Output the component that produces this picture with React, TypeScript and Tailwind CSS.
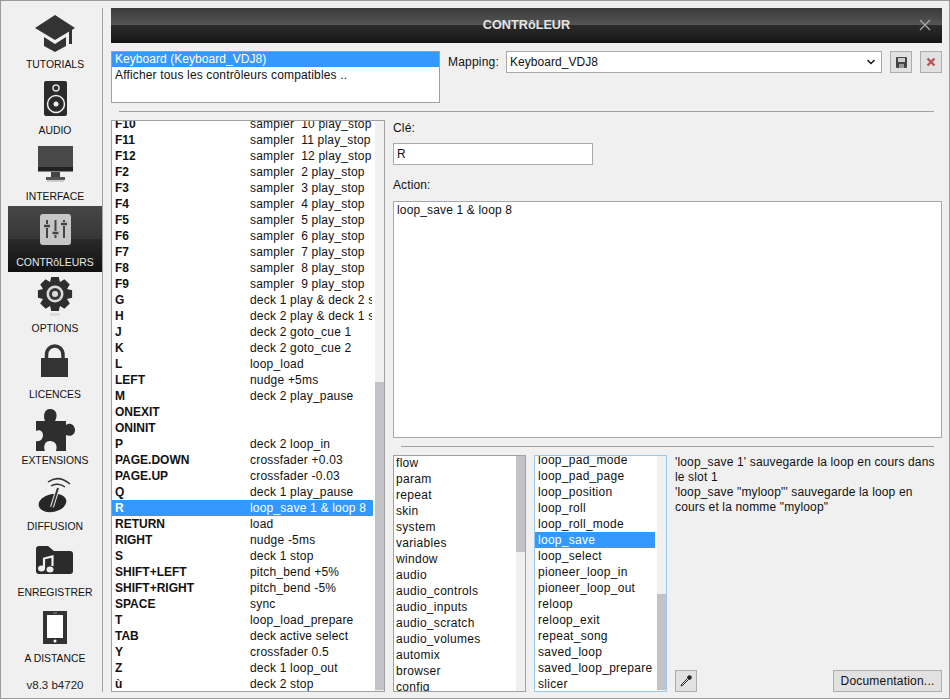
const gear = (() => {
  const cx = 55, cy = 294, pts: string[] = [];
  for (let i = 0; i < 8; i++) {
    const a = (i * Math.PI) / 4 - Math.PI / 2;
    const p = (r: number, d: number) => `${(cx + r * Math.cos(a + d)).toFixed(1)},${(cy + r * Math.sin(a + d)).toFixed(1)}`;
    pts.push(p(13, -0.39), p(17.5, -0.22), p(17.5, 0.22), p(13, 0.39));
  }
  return pts.join(" ");
})();

const items: { label: string; top: number; icon: React.ReactNode }[] = [
  { label: "TUTORIALS", top: 8, icon: (<>
    <path d="M55 15 L75 28 L55 40 L35 28 Z" fill="#333" />
    <path d="M44 37 L55 44 L66 37 L66 46 L55 52 L44 46 Z" fill="#333" />
    <path d="M69 31 L72 29 L72 44 L69 44 Z" fill="#333" />
  </>) },
  { label: "AUDIO", top: 74, icon: (<>
    <rect x="44" y="81" width="23" height="35" rx="2" fill="#2b2b2b" />
    <circle cx="56" cy="88" r="3" fill="none" stroke="#ddd" strokeWidth="1.5" />
    <circle cx="56" cy="104" r="8.5" fill="none" stroke="#eee" strokeWidth="1.5" />
    <circle cx="56" cy="104" r="2.5" fill="#eee" />
  </>) },
  { label: "INTERFACE", top: 140, icon: (<>
    <rect x="38" y="146" width="35" height="21" fill="#484848" />
    <rect x="38" y="167" width="35" height="4.5" fill="#222" />
    <rect x="51" y="172" width="9" height="5" fill="#444" />
    <rect x="46" y="177" width="19" height="3" fill="#555" />
    <rect x="47" y="180" width="17" height="2" fill="#ccc" />
  </>) },
  { label: "CONTRôLEURS", top: 206, icon: (<>
    <rect x="40" y="214" width="31" height="31" rx="3" fill="#c6c6c6" />
    <g stroke="#444" strokeWidth="2">
      <path d="M47 220 V224 M47 228 V238 M55.500 220 V231 M55.500 235 V238 M64 220 V222 M64 226 V238" />
      <path d="M44 226 H50 M52.500 233 H58.500 M61 224 H67" strokeWidth="2.500" />
    </g>
  </>) },
  { label: "OPTIONS", top: 272, icon: (<>
    <polygon points={gear} fill="#2e2e2e" />
    <circle cx="55" cy="294" r="8.500" fill="#dcdcdc" />
    <circle cx="55" cy="294" r="6" fill="#3a3a3a" />
    <circle cx="55" cy="294" r="3" fill="#dcdcdc" />
    <rect x="50" y="313" width="10" height="3" fill="#ddd" />
  </>) },
  { label: "LICENCES", top: 338, icon: (<>
    <rect x="41" y="358" width="27" height="19" fill="#333" />
    <path d="M46.500 359 V355 C46.500 343 63 343 63 355 V359" fill="none" stroke="#333" strokeWidth="3.500" />
  </>) },
  { label: "EXTENSIONS", top: 404, icon: (
    <path d="M36 421 L45 421 C43 416 44 409 50 409 C57 409 58 416 55 421 L66 421 L66 425 C70 422 75 425 75 430 C75 435 70 437 66 435 L66 451 L56 451 C58 445 55 441 50 441 C45 441 43 446 45 451 L36 451 L36 441 C40 442 43 439 43 435 C43 431 39 429 36 431 Z" fill="#2e2e2e" />
  ) },
  { label: "DIFFUSION", top: 470, icon: (<>
    <ellipse cx="52.500" cy="503" rx="14" ry="9" transform="rotate(-12 52.500 503)" fill="#262626" />
    <path d="M52 507 L58 488" stroke="#eee" strokeWidth="4" />
    <path d="M52 507 L58 488" stroke="#333" strokeWidth="2" />
    <path d="M48 482 C55 477 63 478 70 484 M51 486 C55 483 61 484 65 487" fill="none" stroke="#333" strokeWidth="1.500" />
  </>) },
  { label: "ENREGISTRER", top: 536, icon: (<>
    <path d="M36 549 Q36 546 39 546 L48 546 L54 551 L70 551 Q73 551 73 554 L73 571 Q73 574 70 574 L39 574 Q36 574 36 571 Z" fill="#2b2b2b" />
    <path d="M44 568 V558.500 L52.500 556.500 V566" fill="none" stroke="#eee" strokeWidth="2.200" />
    <ellipse cx="41.500" cy="568.500" rx="3.500" ry="3" fill="#eee" />
    <ellipse cx="50" cy="569.500" rx="3.500" ry="3" fill="#eee" />
  </>) },
  { label: "A DISTANCE", top: 602, icon: (<>
    <rect x="43" y="611" width="24" height="33" fill="#333" />
    <rect x="47" y="615" width="16" height="23" fill="#fff" />
    <circle cx="55" cy="641" r="1.500" fill="#fff" />
    <rect x="53" y="612.500" width="4" height="1" fill="#888" />
  </>) },
];

const keys: [string, string][] = [
  ["F10", "sampler  10 play_stop"], ["F11", "sampler  11 play_stop"], ["F12", "sampler  12 play_stop"],
  ["F2", "sampler  2 play_stop"], ["F3", "sampler  3 play_stop"], ["F4", "sampler  4 play_stop"],
  ["F5", "sampler  5 play_stop"], ["F6", "sampler  6 play_stop"], ["F7", "sampler  7 play_stop"],
  ["F8", "sampler  8 play_stop"], ["F9", "sampler  9 play_stop"], ["G", "deck 1 play & deck 2 stop"],
  ["H", "deck 2 play & deck 1 stop"], ["J", "deck 2 goto_cue 1"], ["K", "deck 2 goto_cue 2"],
  ["L", "loop_load"], ["LEFT", "nudge +5ms"], ["M", "deck 2 play_pause"], ["ONEXIT", ""], ["ONINIT", ""],
  ["P", "deck 2 loop_in"], ["PAGE.DOWN", "crossfader +0.03"], ["PAGE.UP", "crossfader -0.03"],
  ["Q", "deck 1 play_pause"], ["R", "loop_save 1 & loop 8"], ["RETURN", "load"], ["RIGHT", "nudge -5ms"],
  ["S", "deck 1 stop"], ["SHIFT+LEFT", "pitch_bend +5%"], ["SHIFT+RIGHT", "pitch_bend -5%"], ["SPACE", "sync"],
  ["T", "loop_load_prepare"], ["TAB", "deck active select"], ["Y", "crossfader 0.5"], ["Z", "deck 1 loop_out"], ["ù", "deck 2 stop"],
];

const groups = ["flow", "param", "repeat", "skin", "system", "variables", "window", "audio", "audio_controls", "audio_inputs", "audio_scratch", "audio_volumes", "automix", "browser", "config"];
const verbs = ["loop_pad_mode", "loop_pad_page", "loop_position", "loop_roll", "loop_roll_mode", "loop_save", "loop_select", "pioneer_loop_in", "pioneer_loop_out", "reloop", "reloop_exit", "repeat_song", "saved_loop", "saved_loop_prepare", "slicer"];

function SideItem({ label, top, icon }: { label: string; top: number; icon: React.ReactNode }) {
  const active = label === "CONTRôLEURS";
  return (
    <div className={active
      ? "h-[66px] w-[94px] shrink-0 flex flex-col bg-[linear-gradient(#474747_0%,#363636_50%,#2a2a2a_50%,#111_100%)]"
      : "h-[66px] w-[94px] shrink-0 flex flex-col"}>
      <svg width="94" height="49" viewBox={`8 ${top} 94 49`} className="block shrink-0">{icon}</svg>
      <div className={active
        ? "h-[16px] leading-[16px] text-center text-[10.4px] text-[#e8e8e8] whitespace-nowrap"
        : "h-[16px] leading-[16px] text-center text-[10.4px] text-[#111] whitespace-nowrap"}>{label}</div>
    </div>
  );
}

export default function App() {
  return (
    <div className="w-[950px] h-[699px] flex bg-[#f0f0f0] border border-[#9a9a9a] font-['Liberation_Sans',Arial,sans-serif] text-[12px] text-[#111] overflow-hidden">
      <div className="w-[102px] shrink-0 h-[684px] mt-[7px] pl-[7px] border-r border-[#a0a0a0] flex flex-col">
        {items.map((it) => <SideItem key={it.label} {...it} />)}
        <div className="w-[94px] text-center text-[11.5px] leading-[14px] mt-[10px] text-[#222]">v8.3 b4720</div>
      </div>

      <div className="w-[831px] ml-[8px] flex flex-col shrink-0">
        <div className="mt-[7px] h-[35px] shrink-0 flex items-center relative bg-[linear-gradient(#3a3a3a_0%,#555_48%,#2c2c2c_48%,#151515_100%)]">
          <div className="flex-1 text-center font-bold text-[12.7px] text-[#e4e4e4]">CONTRôLEUR</div>
          <svg width="12" height="12" viewBox="0 0 12 12" className="absolute right-[11px] top-[11px]">
            <path d="M1 1 L11 11 M11 1 L1 11" stroke="#a8a8a8" strokeWidth="1.300" />
          </svg>
        </div>

        <div className="mt-[8px] h-[52px] shrink-0 flex items-start">
          <div className="w-[329px] h-[52px] bg-white border border-[#a0a0a0]">
            <div className="h-[15px] leading-[15px] bg-[#3399ff] text-white pl-[3px] tracking-[0.05px]">Keyboard (Keyboard_VDJ8)</div>
            <div className="h-[16px] leading-[16px] pl-[3px] tracking-[0.16px]">Afficher tous les contrôleurs compatibles ..</div>
          </div>
          <div className="w-[66px] pl-[8px] h-[22px] leading-[22px] tracking-[0.2px]">Mapping:</div>
          <div className="w-[376px] h-[22px] bg-white border border-[#a9a9a9] flex items-center justify-between pl-[2px] pr-[6px]">
            <span className="tracking-[0.05px] pl-[1px]">Keyboard_VDJ8</span>
            <svg width="8" height="6" viewBox="0 0 8 6"><path d="M0.500 1 L4 4.500 L7.500 1" fill="none" stroke="#111" strokeWidth="1.400" /></svg>
          </div>
          <div className="ml-[8px] w-[22px] h-[22px] bg-[#e1e1e1] border border-[#adadad] flex items-center justify-center">
            <svg width="11" height="11" viewBox="0 0 11 11">
              <rect x="0" y="0" width="11" height="11" rx="1" fill="#444" />
              <rect x="2" y="1" width="7" height="4" fill="#ccc" />
              <rect x="3" y="7" width="5" height="4" fill="#999" />
            </svg>
          </div>
          <div className="ml-[8px] w-[22px] h-[22px] bg-[#e1e1e1] border border-[#adadad] flex items-center justify-center">
            <svg width="10" height="10" viewBox="0 0 10 10"><path d="M1.500 1.500 L8.500 8.500 M8.500 1.500 L1.500 8.500" stroke="#b85454" strokeWidth="2.400" /></svg>
          </div>
        </div>

        <div className="mt-[8px] mx-[8px] h-px shrink-0 bg-[#a0a0a0]" />

        <div className="mt-[8px] flex items-start">
          <div className="w-[274px] h-[572px] bg-white border border-[#a0a0a0] flex overflow-hidden">
            <div className="w-[261px] shrink-0 -mt-[5px]">
              {keys.map(([k, v]) => (
                <div key={k} className={k === "R"
                  ? "h-[16px] leading-[16px] flex bg-[#3399ff] text-white"
                  : "h-[16px] leading-[16px] flex"}>
                  <span className="w-[138px] pl-[3px] font-bold shrink-0">{k}</span>
                  <span className="w-[122px] whitespace-pre overflow-hidden tracking-[0.2px]">{v}</span>
                </div>
              ))}
            </div>
            <div className="ml-[2px] w-[9px] bg-[#f0f0f0] flex flex-col pt-[261px]">
              <div className="h-[308px] bg-[#c2c3c7]" />
            </div>
          </div>

          <div className="w-[549px] ml-[8px] flex flex-col">
            <div className="h-[16px] leading-[16px] tracking-[0.2px]">Clé:</div>
            <div className="mt-[7px] w-[200px] h-[22px] bg-white border border-[#a9a9a9] pl-[3px] leading-[20px]">R</div>
            <div className="mt-[12px] h-[16px] leading-[16px] tracking-[0.1px]">Action:</div>
            <div className="mt-[8px] h-[237px] bg-white border border-[#a9a9a9] pl-[3px] leading-[16px] tracking-[0.15px]">loop_save 1 &amp; loop 8</div>
            <div className="mt-[8px] mx-[8px] h-px bg-[#a0a0a0]" />
            <div className="mt-[8px] flex items-start">
              <div className="w-[133px] h-[237px] bg-white border border-[#a0a0a0] flex overflow-hidden">
                <div className="w-[122px] shrink-0 pl-[2px] -mt-[1px]">
                  {groups.map((g) => <div key={g} className="h-[16px] leading-[16px] tracking-[0.3px]">{g}</div>)}
                </div>
                <div className="w-[9px] bg-[#f0f0f0]"><div className="h-[96px] bg-[#c2c3c7]" /></div>
              </div>
              <div className="ml-[8px] w-[133px] h-[237px] bg-white border border-[#99c9ef] flex overflow-hidden">
                <div className="w-[120px] shrink-0 -mt-[4px]">
                  {verbs.map((g) => (
                    <div key={g} className={g === "loop_save"
                      ? "h-[16px] leading-[16px] pl-[3px] tracking-[0.28px] bg-[#3399ff] text-white whitespace-nowrap"
                      : "h-[16px] leading-[16px] pl-[3px] tracking-[0.28px] whitespace-nowrap"}>{g}</div>
                  ))}
                </div>
                <div className="ml-[2px] w-[9px] bg-[#f0f0f0] pt-[138px]"><div className="h-[96px] bg-[#c2c3c7]" /></div>
              </div>
              <div className="ml-[8px] w-[267px] h-[237px] flex flex-col justify-between">
                <div className="leading-[15px] max-w-[262px] tracking-[0.15px]">
                  'loop_save 1' sauvegarde la loop en cours dans le slot 1<br />
                  'loop_save "myloop"' sauvegarde la loop en cours et la nomme "myloop"
                </div>
                <div className="flex justify-between items-end">
                  <div className="w-[22px] h-[22px] bg-[#e1e1e1] border border-[#adadad] flex items-center justify-center">
                    <svg width="14" height="14" viewBox="0 0 14 14">
                      <path d="M8.500 2.500 Q10 0.500 11.500 1.500 L12.500 2.500 Q13.500 4 11.500 5.500 L10 6 L8 4 Z" fill="#222" />
                      <path d="M8.500 4.500 L2.800 10.200 L2 12 L3.800 11.200 L9.500 5.500" fill="#f4f4f4" stroke="#222" strokeWidth="1" />
                    </svg>
                  </div>
                  <div className="w-[109px] h-[22px] bg-[#e1e1e1] border border-[#adadad] text-center leading-[20px] tracking-[0.2px]">Documentation...</div>
                </div>
              </div>
            </div>
          </div>
        </div>
      </div>
    </div>
  );
}
